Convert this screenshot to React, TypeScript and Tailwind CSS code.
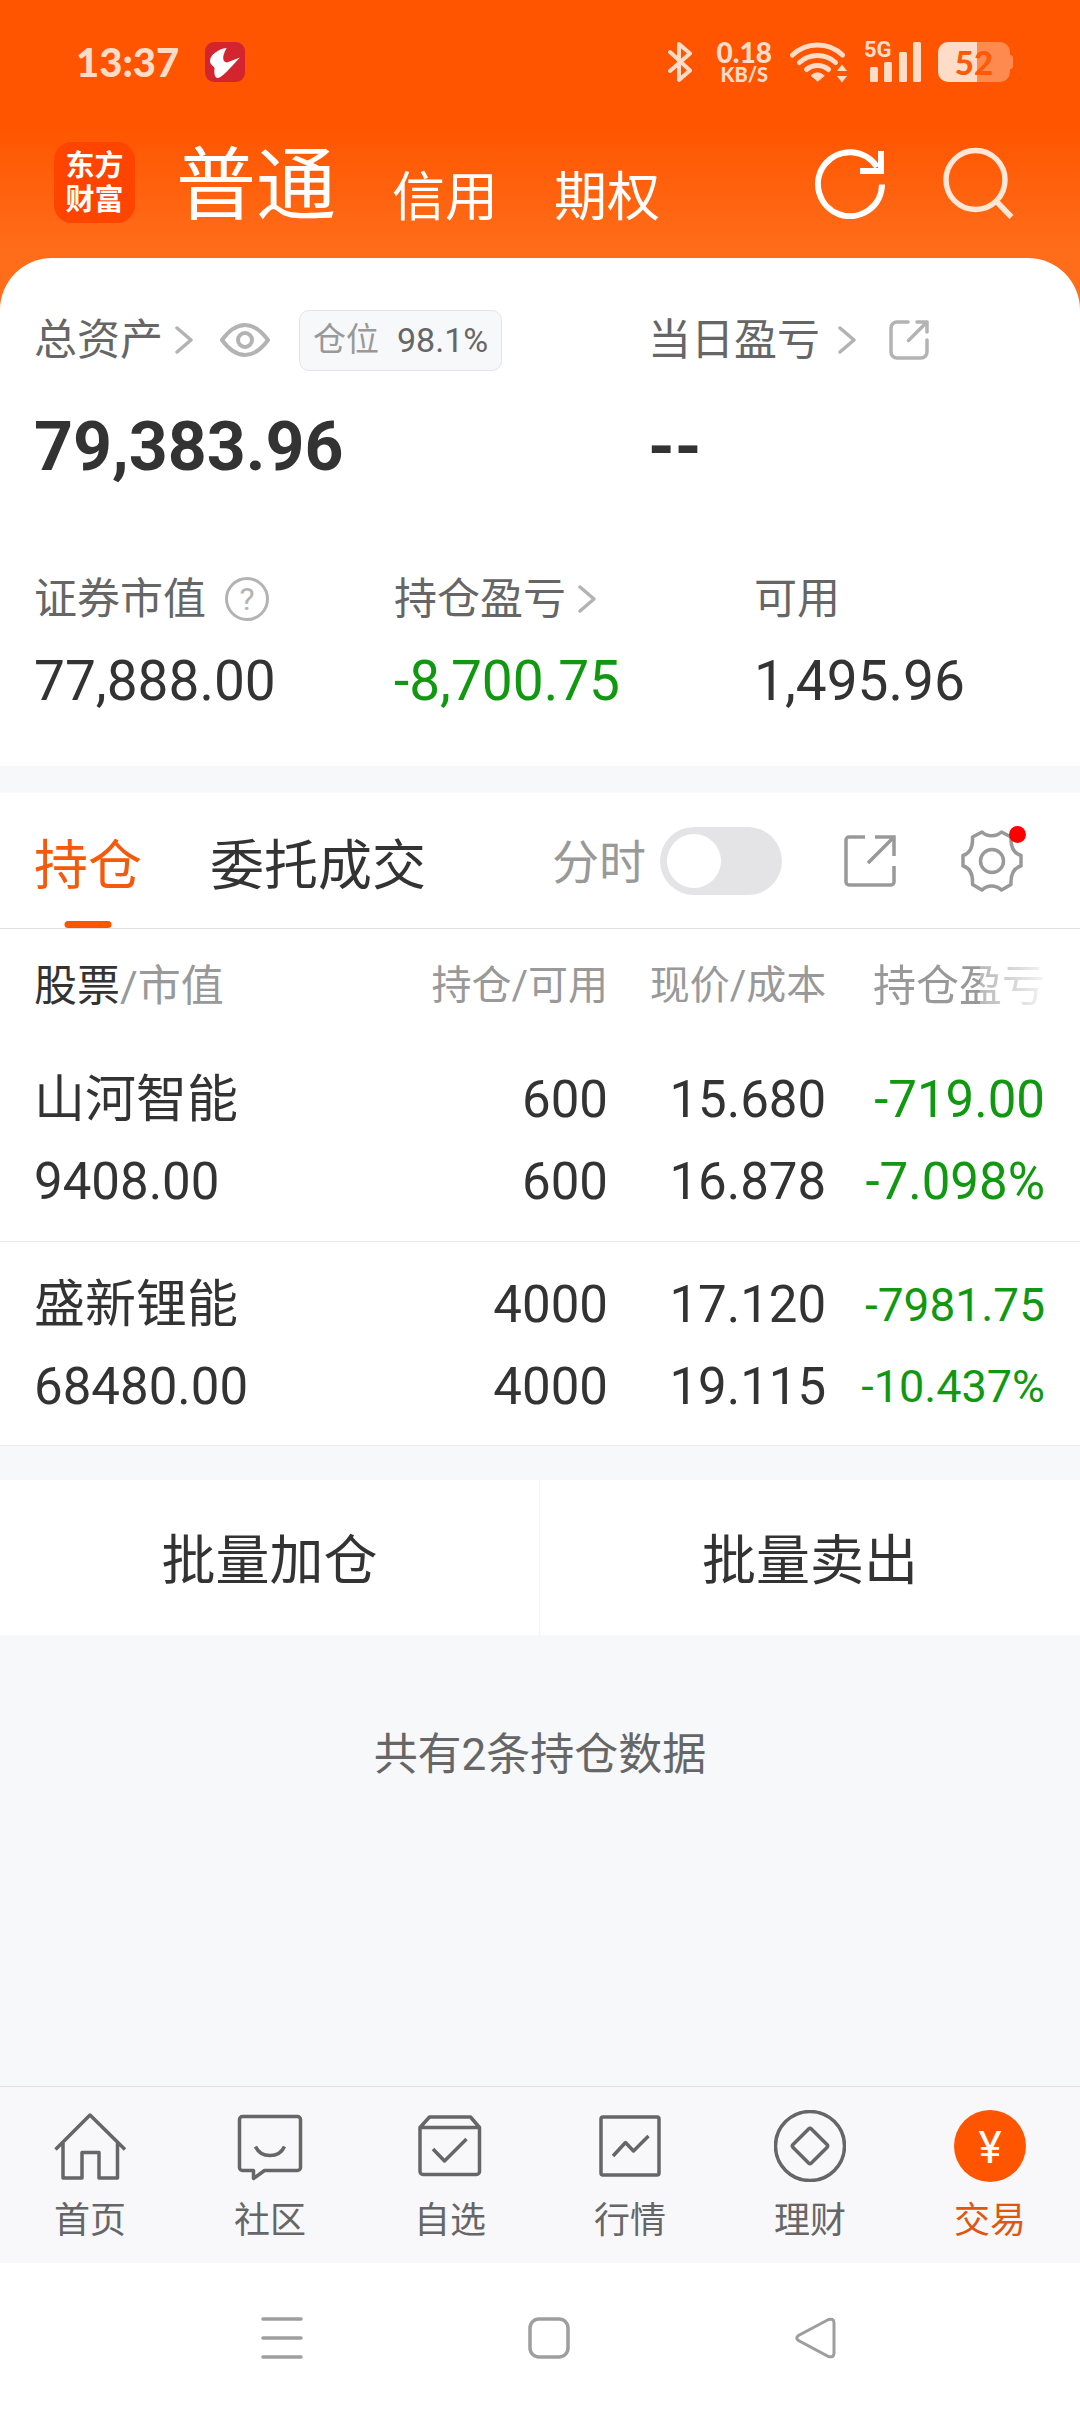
import React, { useState } from 'react';
import clsx from 'clsx';

type Holding = {
  name: string;
  marketValue: string;
  amount: string;
  available: string;
  price: string;
  cost: string;
  profit: string;
  profitRate: string;
  compact?: boolean;
};

const holdings: Holding[] = [
  {
    name: '山河智能',
    marketValue: '9408.00',
    amount: '600',
    available: '600',
    price: '15.680',
    cost: '16.878',
    profit: '-719.00',
    profitRate: '-7.098%',
  },
  {
    name: '盛新锂能',
    marketValue: '68480.00',
    amount: '4000',
    available: '4000',
    price: '17.120',
    cost: '19.115',
    profit: '-7981.75',
    profitRate: '-10.437%',
    compact: true,
  },
];

const accountTabs = ['普通', '信用', '期权'];

function Chevron() {
  return (
    <svg viewBox="0 0 18 28" className="h-7 w-[18px] shrink-0" fill="none" stroke="#b3b3b3" strokeWidth="3.5" strokeLinecap="round" strokeLinejoin="round">
      <path d="M2 2 16 14 2 26" />
    </svg>
  );
}

function StatusBar() {
  return (
    <div className="flex h-[124px] items-center justify-between pl-[76px] pr-[67px] font-[Lato,sans-serif] font-black text-[#ffdcc8]">
      <div className="flex items-center gap-[26px]">
        <span className="text-[40px] leading-[42px]">13:37</span>
        <svg viewBox="0 0 40 40" className="size-10">
          <rect width="40" height="40" rx="9" fill="#d4252f" />
          <path
            d="M21.7 6C13 7 5 13 5 19c0 4 4 5 4.500 7C9 31 9.500 36 13 36c5-1 12-10 22-20.500L22 20.500C16 20 18 12 21.700 6z"
            fill="#fff"
          />
        </svg>
      </div>

      <div className="flex items-center gap-[17px]">
        <svg viewBox="0 0 24 42" className="mr-2 h-[42px] w-6" fill="none" stroke="currentColor" strokeWidth="4" strokeLinecap="round" strokeLinejoin="round">
          <path d="M2 11 22 29.500 11 39V3L22 12.500 2 30" />
        </svg>
        <div className="text-center">
          <div className="text-[28px] leading-6">0.18</div>
          <div className="text-[20px] leading-5">KB/S</div>
        </div>
        <svg viewBox="0 0 58 42" className="h-[42px] w-[58px]" fill="none" stroke="currentColor" strokeWidth="5" strokeLinecap="round">
          <path d="M3.500 14A36 36 0 0 1 53.500 14" />
          <path d="M10.500 21.500A27 27 0 0 1 46.500 21.500" />
          <path d="M17.500 28.500A17 17 0 0 1 39.500 28.500" />
          <path d="M28.500 40 22 34.500Q28.500 29 35 34.500Z" fill="currentColor" strokeWidth="1" />
          <path d="M48 30 53 23.500 58 30ZM48 35H58L53 41.500Z" fill="currentColor" stroke="none" />
        </svg>
        <div className="relative">
          <svg viewBox="0 0 57 42" className="h-[42px] w-[57px]" fill="currentColor">
            <rect x="6" y="26" width="8" height="15" rx="1.500" />
            <rect x="20" y="21" width="8" height="20" rx="1.500" />
            <rect x="35" y="11" width="8" height="30" rx="1.500" />
            <rect x="49" y="1" width="8" height="40" rx="1.500" />
          </svg>
          <span className="absolute left-0 top-0 font-[Roboto,sans-serif] text-[22px] font-bold leading-[18px]">5G</span>
        </div>
        <div className="flex items-center">
          <div className="flex h-10 w-[72px] items-center justify-center rounded-[10px] bg-[linear-gradient(90deg,#ffdcc8_54%,#ff8a50_54%)] text-[33px] leading-10 text-[#ff5a08]">
            52
          </div>
          <div className="h-[14px] w-[3px] rounded-r-sm bg-[#ff8a50]" />
        </div>
      </div>
    </div>
  );
}

function TopBar() {
  const [current, setCurrent] = useState('普通');

  return (
    <div className="flex items-center pb-[35px] pl-[54px] pr-[65px] pt-[18px] text-white">
      <div className="flex size-[81px] flex-col items-center justify-center rounded-[18px] bg-[#ff4400] text-[29px] font-bold leading-[34px]">
        <span>东方</span>
        <span>财富</span>
      </div>
      <nav className="ml-[41px] flex h-[81px] flex-1 items-end gap-[56px]">
        {accountTabs.map((tab) => (
          <button
            key={tab}
            onClick={() => setCurrent(tab)}
            className={clsx(
              tab === current ? 'text-[80px] leading-[74px]' : 'text-[53px] leading-[50px]'
            )}
          >
            {tab}
          </button>
        ))}
      </nav>
      <div className="flex items-center gap-[57px]">
        <button aria-label="刷新">
          <svg viewBox="0 0 72 72" className="size-[72px]" fill="none" stroke="#fff" strokeWidth="6">
            <path d="M68 37.500A32 32 0 1 1 63 20" />
            <path d="M67 4V24H46" />
          </svg>
        </button>
        <button aria-label="搜索">
          <svg viewBox="0 0 72 72" className="size-[72px]" fill="none" stroke="#ffe6d6" strokeWidth="5.500">
            <circle cx="32.500" cy="33" r="29.500" />
            <path d="M53 54 68.500 70" />
          </svg>
        </button>
      </div>
    </div>
  );
}

function Assets() {
  return (
    <section className="rounded-t-[52px] bg-white pb-[55px] pt-[52px] text-[#333]">
      <div className="grid grid-cols-[3fr_2fr]">
        <div className="pl-[34px]">
          <div className="flex h-[60px] items-center">
            <a href="#assets" className="flex items-center gap-3 text-[43px] leading-[60px] text-[#666]">
              总资产
              <Chevron />
            </a>
            <button aria-label="隐藏金额" className="ml-[27px]">
              <svg viewBox="0 0 50 34" className="h-[34px] w-[50px]" fill="none" stroke="#b3b3b3" strokeWidth="4" strokeLinejoin="round">
                <path d="M2 17C10 6 17 2 25 2s15 4 23 15C40 28 33 32 25 32S10 28 2 17z" />
                <circle cx="25" cy="17" r="7" />
              </svg>
            </button>
            <div className="ml-[29px] flex h-[61px] items-center gap-[18px] rounded-[10px] border border-[#e4e4e6] bg-[#f7f8fa] px-[13px] text-[#999]">
              <span className="text-[33px]">仓位</span>
              <span className="text-[34px] text-[#666]">98.1%</span>
            </div>
          </div>
          <div className="mt-[37px] text-[68px] font-bold leading-[80px]">79,383.96</div>
        </div>
        <div>
          <div className="flex h-[60px] items-center">
            <a href="#today" className="flex items-center gap-[18px] text-[43px] leading-[60px] text-[#666]">
              当日盈亏
              <Chevron />
            </a>
            <button aria-label="分享当日盈亏" className="ml-[33px]">
              <svg viewBox="0 0 40 40" className="size-10" fill="none" stroke="#b3b3b3" strokeWidth="3.500" strokeLinecap="round" strokeLinejoin="round">
                <path d="M19 2H8a6 6 0 0 0-6 6V32a6 6 0 0 0 6 6H32a6 6 0 0 0 6-6V20" />
                <path d="M28 2H38V12M38 2 19.500 20.500" />
              </svg>
            </button>
          </div>
          <div className="mt-[37px] text-[68px] font-bold leading-[80px]">--</div>
        </div>
      </div>

      <div className="mt-[82px] grid grid-cols-3">
        <div className="pl-[34px]">
          <div className="flex h-[60px] items-center gap-[19px] text-[43px] text-[#666]">
            证券市值
            <button className="flex size-11 items-center justify-center rounded-full border-[3px] border-[#b3b3b3] text-[32px] leading-[38px] text-[#b3b3b3]">
              ?
            </button>
          </div>
          <div className="mt-[22px] text-[55px] leading-[60px]">77,888.00</div>
        </div>
        <div className="pl-[34px]">
          <a href="#profit" className="flex h-[60px] items-center gap-3 text-[43px] text-[#666]">
            持仓盈亏
            <Chevron />
          </a>
          <div className="mt-[22px] text-[55px] leading-[60px] text-[#109810]">-8,700.75</div>
        </div>
        <div className="pl-[34px]">
          <div className="flex h-[60px] items-center text-[43px] text-[#666]">可用</div>
          <div className="mt-[22px] text-[55px] leading-[60px]">1,495.96</div>
        </div>
      </div>
    </section>
  );
}

function HoldingTabs() {
  const [tab, setTab] = useState('持仓');
  const [minute, setMinute] = useState(false);

  return (
    <div className="mt-[27px] flex h-[136px] items-center justify-between border-b border-[#e0e0e0] bg-white pl-[34px] pr-[57px]">
      <div className="flex h-full gap-[68px]">
        {['持仓', '委托成交'].map((name) => (
          <button
            key={name}
            onClick={() => setTab(name)}
            className={clsx(
              'relative h-full pt-3 text-[54px]',
              name === tab ? 'text-[#f4590c]' : 'text-[#333]'
            )}
          >
            {name}
            {name === tab && (
              <span className="absolute bottom-0 left-1/2 h-[7px] w-[47px] -translate-x-1/2 rounded-full bg-[#ff5500]" />
            )}
          </button>
        ))}
      </div>
      <div className="flex items-center">
        <label htmlFor="minute" className="pt-1 text-[47px] leading-[68px] text-[#999]">
          分时
        </label>
        <input
          id="minute"
          type="checkbox"
          checked={minute}
          onChange={(e) => setMinute(e.target.checked)}
          className="ml-[14px] flex h-[68px] w-[122px] appearance-none items-center rounded-full bg-[#e4e4e6] px-[7px] before:size-[54px] before:rounded-full before:bg-white checked:justify-end checked:bg-[#ff5500]"
        />
        <button aria-label="分享持仓" className="ml-[62px]">
          <svg viewBox="0 0 52 52" className="size-[52px]" fill="none" stroke="#999" strokeWidth="3.500">
            <path d="M21 2H5a3 3 0 0 0-3 3V47a3 3 0 0 0 3 3H47a3 3 0 0 0 3-3V31" />
            <path d="M31 2H50V21M50 2 24 28" />
          </svg>
        </button>
        <button aria-label="设置" className="relative ml-[65px]">
          <svg viewBox="0 0 62 62" className="size-[62px]" fill="none" stroke="#999" strokeWidth="3.500" strokeLinejoin="round">
            <path d="M21 2 11.500 7C12 16 10 23 2 25.500V36C10 38 12 45 11.500 54.500L21 60C26 54.500 35 54.500 40.500 60L50 54.500C49.500 45 52 38 60 36V25.500C52 23 49.500 16 50 7L40.500 2C35 7 26 7 21 2Z" />
            <circle cx="31" cy="31" r="11.500" />
          </svg>
          <span className="absolute -right-[3px] -top-1 size-[17px] rounded-full bg-[#ff0000]" />
        </button>
      </div>
    </div>
  );
}

function HoldingTable() {
  return (
    <table className="w-full table-fixed bg-white text-right text-[51px] leading-[82px] text-[#333]">
      <thead>
        <tr className="h-[108px] text-[40px] leading-[60px] text-[#999]">
          <th className="w-[33%] pl-[34px] pt-[5px] text-left text-[43px] font-normal">
            <span className="text-[#333]">股票</span>/市值
          </th>
          <th className="w-[23.3%] pt-[5px] font-normal">持仓/可用</th>
          <th className="w-[20.2%] pt-[5px] font-normal">现价/成本</th>
          <th className="pr-[35px] pt-[5px] text-[43px] font-normal">
            <span className="inline-block [mask-image:linear-gradient(90deg,#000_62%,rgb(0_0_0/0.7)_62%,rgb(0_0_0/0.1)_100%)]">
              持仓盈亏
            </span>
          </th>
        </tr>
      </thead>
      <tbody>
        {holdings.map((item) => (
          <tr key={item.name} className="h-[204px] border-b border-[#ebebeb]">
            <td className="pl-[34px] pt-[5px] text-left">
              <div>{item.name}</div>
              <div>{item.marketValue}</div>
            </td>
            <td className="pt-[5px]">
              <div>{item.amount}</div>
              <div>{item.available}</div>
            </td>
            <td className="pt-[5px]">
              <div>{item.price}</div>
              <div>{item.cost}</div>
            </td>
            <td className="pr-[35px] pt-[5px] text-[#109810]">
              <div className={clsx(item.compact && 'text-[46px]')}>{item.profit}</div>
              <div className={clsx(item.compact && 'text-[45px]')}>{item.profitRate}</div>
            </td>
          </tr>
        ))}
      </tbody>
    </table>
  );
}

const navItems = [
  {
    label: '首页',
    icon: <path d="M1.500 39.500 36 5 71 39.500M9 33V68H28V42.500H45V68H63.500V33" />,
  },
  {
    label: '社区',
    icon: (
      <>
        <path d="M8.500 6.500H63.500a3 3 0 0 1 3 3V57.500a3 3 0 0 1-3 3H30.500L19.500 68.500V60.500H8.500a3 3 0 0 1-3-3V9.500a3 3 0 0 1 3-3z" />
        <path d="M21.500 36.500C27 48.500 45 48.500 50.500 36.500" />
      </>
    ),
  },
  {
    label: '自选',
    icon: (
      <>
        <path d="M6 17.500 15.500 7H56.500L65.500 17.500V61.500a3 3 0 0 1-3 3H9a3 3 0 0 1-3-3zM6 17.500H65.500" />
        <path d="M19 39 30.500 51 52.500 29" />
      </>
    ),
  },
  {
    label: '行情',
    icon: (
      <>
        <rect x="7" y="7" width="58" height="58" rx="2" />
        <path d="M19 46 31.500 32.500 39.500 41 54.500 26" />
      </>
    ),
  },
  {
    label: '理财',
    icon: (
      <>
        <circle cx="36" cy="36" r="34.500" />
        <rect x="23" y="23" width="26" height="26" rx="2" transform="rotate(45 36 36)" />
      </>
    ),
  },
  {
    label: '交易',
    icon: (
      <>
        <circle cx="36" cy="36" r="36" fill="#ff5500" stroke="none" />
        <text x="36" y="53" textAnchor="middle" fontSize="44" fill="#fff" stroke="none">
          ¥
        </text>
      </>
    ),
  },
];

function BottomNav() {
  return (
    <nav className="grid grid-cols-6 border-t border-[#e0e0e0] bg-[#f8f8fa] pb-[17px] pt-[23px]">
      {navItems.map(({ label, icon }) => (
        <a
          key={label}
          href={`#${label}`}
          className={clsx(
            'flex flex-col items-center gap-[14px] text-[36px] leading-[50px]',
            label === '交易' ? 'text-[#e0560f]' : 'text-[#666]'
          )}
        >
          <svg viewBox="0 0 72 72" className="size-[72px]" fill="none" stroke="currentColor" strokeWidth="3.5" strokeLinejoin="round">
            {icon}
          </svg>
          {label}
        </a>
      ))}
    </nav>
  );
}

function SystemNav() {
  return (
    <div className="flex h-[149px] items-center justify-center gap-[225px] bg-white pl-[18px]">
      <button aria-label="最近任务">
        <svg viewBox="0 0 42 42" className="size-[42px]" stroke="#9e9e9e" strokeWidth="3.500" strokeLinecap="round">
          <path d="M2 2H40M2 21H40M2 40H40" />
        </svg>
      </button>
      <button aria-label="主屏幕">
        <svg viewBox="0 0 42 42" className="size-[42px]" fill="none" stroke="#9e9e9e" strokeWidth="3.500">
          <rect x="2" y="2" width="38" height="38" rx="9" />
        </svg>
      </button>
      <button aria-label="返回">
        <svg viewBox="0 0 42 42" className="size-[42px]" fill="none" stroke="#9e9e9e" strokeWidth="3">
          <path d="M33.500 2.500 3.500 18.500Q0 21 3.500 23.500L33.500 39.500Q39 41 39 36V6Q39 1 33.500 2.500Z" />
        </svg>
      </button>
    </div>
  );
}

export default function App() {
  return (
    <div className="flex min-h-screen flex-col bg-[#f7f8fa] font-[Roboto,'Noto_Sans_CJK_SC',sans-serif]">
      <header className="bg-[linear-gradient(180deg,#ff5500_125px,#ff6d1a_250px)]">
        <StatusBar />
        <TopBar />
        <Assets />
      </header>

      <main className="flex-1">
        <HoldingTabs />
        <HoldingTable />
        <div className="mt-[34px] grid grid-cols-2 bg-white text-[54px] leading-[147px] text-[#333]">
          <button className="border-r border-[#f4f4f6] pt-2">批量加仓</button>
          <button className="pt-2">批量卖出</button>
        </div>
        <p className="mt-[90px] text-center text-[44px] leading-[60px] text-[#666]">共有2条持仓数据</p>
      </main>

      <BottomNav />
      <SystemNav />
    </div>
  );
}
